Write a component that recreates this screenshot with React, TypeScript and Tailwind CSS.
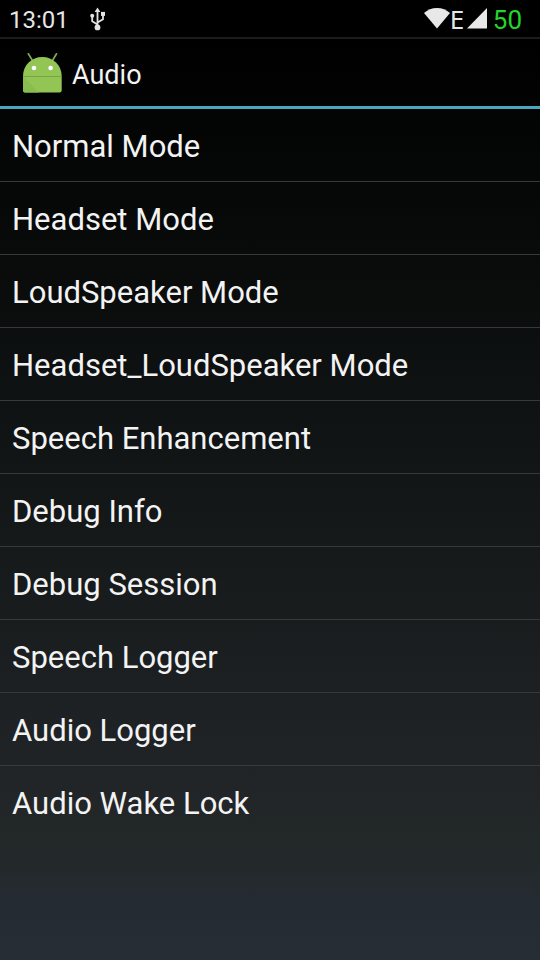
// ── Audio test menu (engineering mode) ─────────────────────

const MODES = [
  "Normal Mode",
  "Headset Mode",
  "LoudSpeaker Mode",
  "Headset_LoudSpeaker Mode",
  "Speech Enhancement",
  "Debug Info",
  "Debug Session",
  "Speech Logger",
  "Audio Logger",
  "Audio Wake Lock",
];

function UsbIcon() {
  return (
    <svg viewBox="0 0 20 26" className="w-5 h-[26px]" fill="none" stroke="#e4e4e4" strokeWidth="1.8" aria-label="USB">
      <path d="M10.5 21V4M10.5 18.5L5.2 15.2V10M10.5 16.5L16 13.2V8" />
      <path d="M10.5 1.5L13.4 6H7.6Z" fill="#e4e4e4" stroke="none" />
      <circle cx="5.2" cy="9.7" r="2" fill="#e4e4e4" stroke="none" />
      <path d="M14 5.9h4v4h-4z" fill="#e4e4e4" stroke="none" />
      <circle cx="10.5" cy="21.4" r="2.9" fill="#e4e4e4" stroke="none" />
    </svg>
  );
}

function WifiIcon() {
  return (
    <svg viewBox="0 0 26 21" className="w-[26px] h-[21px]" fill="#e8e8e8" aria-label="Wi-Fi">
      <path d="M13 20.500L0 5C3.400 1.900 8 0 13 0S22.600 1.900 26 5Z" />
    </svg>
  );
}

function SignalIcon() {
  return (
    <svg viewBox="0 0 20 21" className="w-5 h-[21px]" fill="#e8e8e8" aria-label="Signal">
      <path d="M0 20.500L20 0V20.500Z" />
    </svg>
  );
}

function AndroidIcon() {
  return (
    <svg viewBox="0 0 48 48" className="w-12 h-12" aria-hidden="true">
      <path d="M10.300 4.800L14.500 11.500M38.500 4.800L34.500 11.500" stroke="#7fa653" strokeWidth="1.7" strokeLinecap="round" />
      <path d="M5 27.300C5 16 13.500 8 24.300 8S43.700 16 43.700 27.300Z" fill="#92c554" />
      <path d="M5 27.300H43.700V41.600Q43.700 43.400 41.900 43.400H6.800Q5 43.400 5 41.600Z" fill="#92c554" />
      <path d="M5 27.300L21 43.400H6.800Q5 43.400 5 41.600Z" fill="#8abd50" />
      <path d="M5 27.500H43.700" stroke="#78a548" strokeWidth=".8" />
      <circle cx="16" cy="19" r="2.300" fill="#fff" />
      <circle cx="32.600" cy="19" r="2.300" fill="#fff" />
    </svg>
  );
}

function StatusBar() {
  return (
    <div className="flex items-center h-[39px] pl-[9px] pr-[18px] border-b-2 border-[#1c1c1c] bg-black text-[#e6e6e6]">
      <span className="pt-[2px] text-[24px] leading-6">13:01</span>
      <span className="ml-[18px]"><UsbIcon /></span>
      <div className="ml-auto flex items-center">
        <WifiIcon />
        <span className="w-[17px] font-['Noto_Sans',sans-serif] text-[26px] leading-6">E</span>
        <SignalIcon />
        <span className="ml-[6px] pt-[2px] text-[26px] leading-6 text-[#22d62a]">50</span>
      </div>
    </div>
  );
}

export default function App() {
  return (
    <div className="min-h-screen flex flex-col font-[Roboto,'Noto_Sans',sans-serif] text-[#f3f3f3] bg-[linear-gradient(#000_5%,#060807_20%,#131617_50%,#212426_80%,#23292a_90%,#252b32_94%,#272d34)]">
      <StatusBar />
      <header className="flex items-center gap-[6px] h-[70px] pl-[18px] border-b-3 border-[#4ba7bf]">
        <AndroidIcon />
        <h1 className="pt-1 text-[27px] leading-8">Audio</h1>
      </header>
      <ul className="divide-y divide-[#363a3b]">
        {MODES.map(mode => (
          <li key={mode}>
            <button type="button" className="block w-full h-[72px] px-3 pt-1 text-left text-[31px] leading-10">{mode}</button>
          </li>
        ))}
      </ul>
    </div>
  );
}
